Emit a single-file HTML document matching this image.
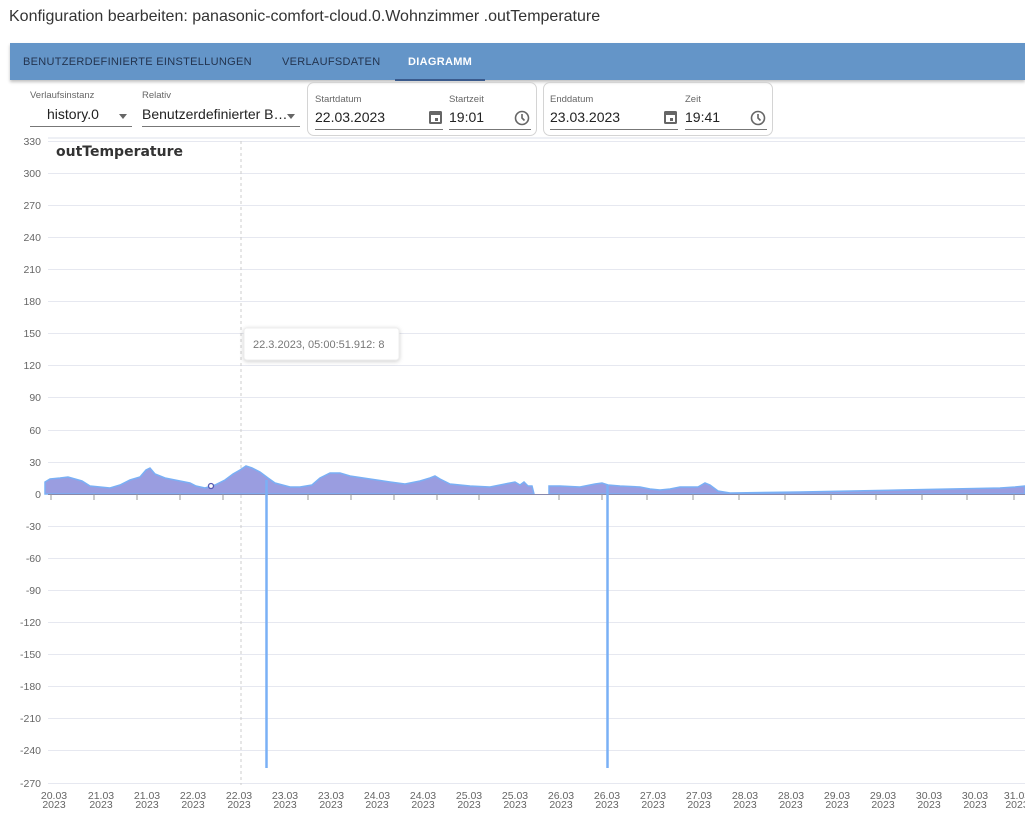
<!DOCTYPE html>
<html><head><meta charset="utf-8"><style>
body{margin:0;width:1025px;height:836px;background:#fff;font-family:"Liberation Sans",sans-serif;position:relative;overflow:hidden;color:#333}
.a{position:absolute}
.t{left:9px;top:8px;font-size:16px;color:#333}
.bar{left:10px;top:43px;width:1015px;height:37px;background:#6495c8;box-shadow:0 2px 3px rgba(0,0,0,.25)}
.tab{top:56px;font-size:11px;color:#23344f;letter-spacing:.3px}
.lbl{font-size:9.5px;color:#666}
.val{font-size:14px;color:#222}
.ul{height:1px;background:#777}
.box{border:1px solid #d4d4d4;border-radius:7px}
</style></head><body>
<div class="a t">Konfiguration bearbeiten: panasonic-comfort-cloud.0.Wohnzimmer .outTemperature</div>
<div class="a bar"></div>
<div class="a tab" style="left:23px">BENUTZERDEFINIERTE EINSTELLUNGEN</div>
<div class="a tab" style="left:282px">VERLAUFSDATEN</div>
<div class="a tab" style="left:408px;color:#fff;font-weight:bold">DIAGRAMM</div>
<div class="a" style="left:395px;top:79px;width:90px;height:2px;background:#3a5a8c"></div>

<div class="a lbl" style="left:30px;top:90px">Verlaufsinstanz</div>
<div class="a val" style="left:47px;top:106px">history.0</div>
<div class="a" style="left:119px;top:114px;border:4px solid transparent;border-top:5px solid #666"></div>
<div class="a ul" style="left:30px;top:126px;width:102px"></div>
<div class="a lbl" style="left:142px;top:90px">Relativ</div>
<div class="a val" style="left:142px;top:106px">Benutzerdefinierter B…</div>
<div class="a" style="left:287px;top:114px;border:4px solid transparent;border-top:5px solid #666"></div>
<div class="a ul" style="left:142px;top:126px;width:158px"></div>

<div class="a box" style="left:307px;top:82px;width:228px;height:52px"></div>
<div class="a lbl" style="left:315px;top:94px">Startdatum</div>
<div class="a val" style="left:315px;top:109px">22.03.2023</div>
<div class="a ul" style="left:315px;top:129px;width:128px"></div>
<div class="a lbl" style="left:449px;top:94px">Startzeit</div>
<div class="a val" style="left:449px;top:109px">19:01</div>
<div class="a ul" style="left:449px;top:129px;width:82px"></div>

<div class="a box" style="left:543px;top:82px;width:228px;height:52px"></div>
<div class="a lbl" style="left:550px;top:94px">Enddatum</div>
<div class="a val" style="left:550px;top:109px">23.03.2023</div>
<div class="a ul" style="left:550px;top:129px;width:128px"></div>
<div class="a lbl" style="left:685px;top:94px">Zeit</div>
<div class="a val" style="left:685px;top:109px">19:41</div>
<div class="a ul" style="left:685px;top:129px;width:82px"></div>

<svg class="a" style="left:0;top:0" width="1025" height="836">
<g fill="#666"><rect x="429" y="111" width="13" height="13" rx="1.5"/><rect x="664" y="111" width="13" height="13" rx="1.5"/></g>
<g fill="#fff"><rect x="431" y="115" width="9" height="7"/><rect x="666" y="115" width="9" height="7"/></g>
<g fill="#666"><rect x="435" y="118" width="3" height="3"/><rect x="670" y="118" width="3" height="3"/></g>
<g fill="none" stroke="#666" stroke-width="1.6"><circle cx="522" cy="118" r="6.5"/><circle cx="758" cy="118" r="6.5"/><path d="M522 114v4l2.5 2.5M758 114v4l2.5 2.5"/></g>
<line x1="48" y1="138" x2="1025" y2="138" stroke="#eef0f5" stroke-width="2"/>
<g stroke="#e6e8f0" stroke-width="1">
<line x1="48" y1="141.5" x2="1025" y2="141.5"/><line x1="48" y1="173.5" x2="1025" y2="173.5"/><line x1="48" y1="205.5" x2="1025" y2="205.5"/><line x1="48" y1="237.5" x2="1025" y2="237.5"/><line x1="48" y1="269.5" x2="1025" y2="269.5"/><line x1="48" y1="301.5" x2="1025" y2="301.5"/><line x1="48" y1="333.5" x2="1025" y2="333.5"/><line x1="48" y1="365.5" x2="1025" y2="365.5"/><line x1="48" y1="397.5" x2="1025" y2="397.5"/><line x1="48" y1="430.5" x2="1025" y2="430.5"/><line x1="48" y1="462.5" x2="1025" y2="462.5"/><line x1="48" y1="526.5" x2="1025" y2="526.5"/><line x1="48" y1="558.5" x2="1025" y2="558.5"/><line x1="48" y1="590.5" x2="1025" y2="590.5"/><line x1="48" y1="622.5" x2="1025" y2="622.5"/><line x1="48" y1="654.5" x2="1025" y2="654.5"/><line x1="48" y1="686.5" x2="1025" y2="686.5"/><line x1="48" y1="718.5" x2="1025" y2="718.5"/><line x1="48" y1="750.5" x2="1025" y2="750.5"/><line x1="48" y1="783.5" x2="1025" y2="783.5"/>
</g>
<g font-size="10.5" fill="#666" text-anchor="end">
<text x="41" y="145">330</text><text x="41" y="177">300</text><text x="41" y="209">270</text><text x="41" y="241">240</text><text x="41" y="273">210</text><text x="41" y="305">180</text><text x="41" y="337">150</text><text x="41" y="369">120</text><text x="41" y="401">90</text><text x="41" y="434">60</text><text x="41" y="466">30</text><text x="41" y="498">0</text><text x="41" y="530">-30</text><text x="41" y="562">-60</text><text x="41" y="594">-90</text><text x="41" y="626">-120</text><text x="41" y="658">-150</text><text x="41" y="690">-180</text><text x="41" y="722">-210</text><text x="41" y="754">-240</text><text x="41" y="787">-270</text>
</g>
<text x="56" y="156" font-size="14" font-weight="bold" fill="#333" font-family="DejaVu Sans,sans-serif">outTemperature</text>
<line x1="241" y1="141" x2="241" y2="785" stroke="#ccc" stroke-dasharray="3,3"/>
<path d="M45 494L45 482L50 479L60 478L68 477L75 479L82 481L90 486L100 487L110 488L120 485L130 480L140 477L146 470L150 468L155 474L165 478L175 480L190 483L196 486L205 488L215 485L225 480L233 474L240 470L246 466L252 468L260 472L268 478L275 483L290 487L300 487L312 485L320 478L330 473L340 473L350 476L370 479L390 482L405 484L420 481L430 478L435 476L440 479L450 484L470 486L490 487L505 484L515 482L520 485L524 482L528 486L532 486L534 494Z M549 494L549 486L560 486L580 487L595 484L602 483L608 485L620 486L640 487L650 489L660 490L670 489L680 487L698 487L705 483L710 485L718 491L730 493L800 492L900 490L1000 488L1015 487L1025 486L1025 494Z" fill="#9a9de0" stroke="#7ab0f5" stroke-width="1.5"/>
<line x1="48" y1="494.5" x2="1025" y2="494.5" stroke="#8888aa" stroke-width="1"/>
<g stroke="#999"><path d="M51 494v6M94 494v6M137 494v6M180 494v6M223 494v6M266 494v6M308 494v6M351 494v6M394 494v6M437 494v6M479 494v6M559 494v6M602 494v6M647 494v6M693 494v6M739 494v6M785 494v6M831 494v6M876 494v6M922 494v6M967 494v6M1014 494v6"/></g>
<g stroke="#7ab0f5" stroke-width="2.5"><line x1="266.5" y1="480" x2="266.5" y2="768"/><line x1="607.5" y1="485" x2="607.5" y2="768"/></g>
<circle cx="211" cy="486" r="2.5" fill="#fff" stroke="#5558b0" stroke-width="1.3"/>
<rect x="244" y="328" width="155" height="32" rx="3" fill="#fff" stroke="#eee" style="filter:drop-shadow(0 1px 2px rgba(0,0,0,.2))"/>
<text x="253" y="348" font-size="11" fill="#777">22.3.2023, 05:00:51.912: 8</text>
<g font-size="10.5" fill="#666" text-anchor="middle">
<text x="54" y="799">20.03</text><text x="54" y="808">2023</text>
<text x="101" y="799">21.03</text><text x="101" y="808">2023</text>
<text x="147" y="799">21.03</text><text x="147" y="808">2023</text>
<text x="193" y="799">22.03</text><text x="193" y="808">2023</text>
<text x="239" y="799">22.03</text><text x="239" y="808">2023</text>
<text x="285" y="799">23.03</text><text x="285" y="808">2023</text>
<text x="331" y="799">23.03</text><text x="331" y="808">2023</text>
<text x="377" y="799">24.03</text><text x="377" y="808">2023</text>
<text x="423" y="799">24.03</text><text x="423" y="808">2023</text>
<text x="469" y="799">25.03</text><text x="469" y="808">2023</text>
<text x="515" y="799">25.03</text><text x="515" y="808">2023</text>
<text x="561" y="799">26.03</text><text x="561" y="808">2023</text>
<text x="607" y="799">26.03</text><text x="607" y="808">2023</text>
<text x="653" y="799">27.03</text><text x="653" y="808">2023</text>
<text x="699" y="799">27.03</text><text x="699" y="808">2023</text>
<text x="745" y="799">28.03</text><text x="745" y="808">2023</text>
<text x="791" y="799">28.03</text><text x="791" y="808">2023</text>
<text x="837" y="799">29.03</text><text x="837" y="808">2023</text>
<text x="883" y="799">29.03</text><text x="883" y="808">2023</text>
<text x="929" y="799">30.03</text><text x="929" y="808">2023</text>
<text x="975" y="799">30.03</text><text x="975" y="808">2023</text>
<text x="1017" y="799">31.03</text><text x="1017" y="808">2023</text>
</g>
</svg>
</body></html>
